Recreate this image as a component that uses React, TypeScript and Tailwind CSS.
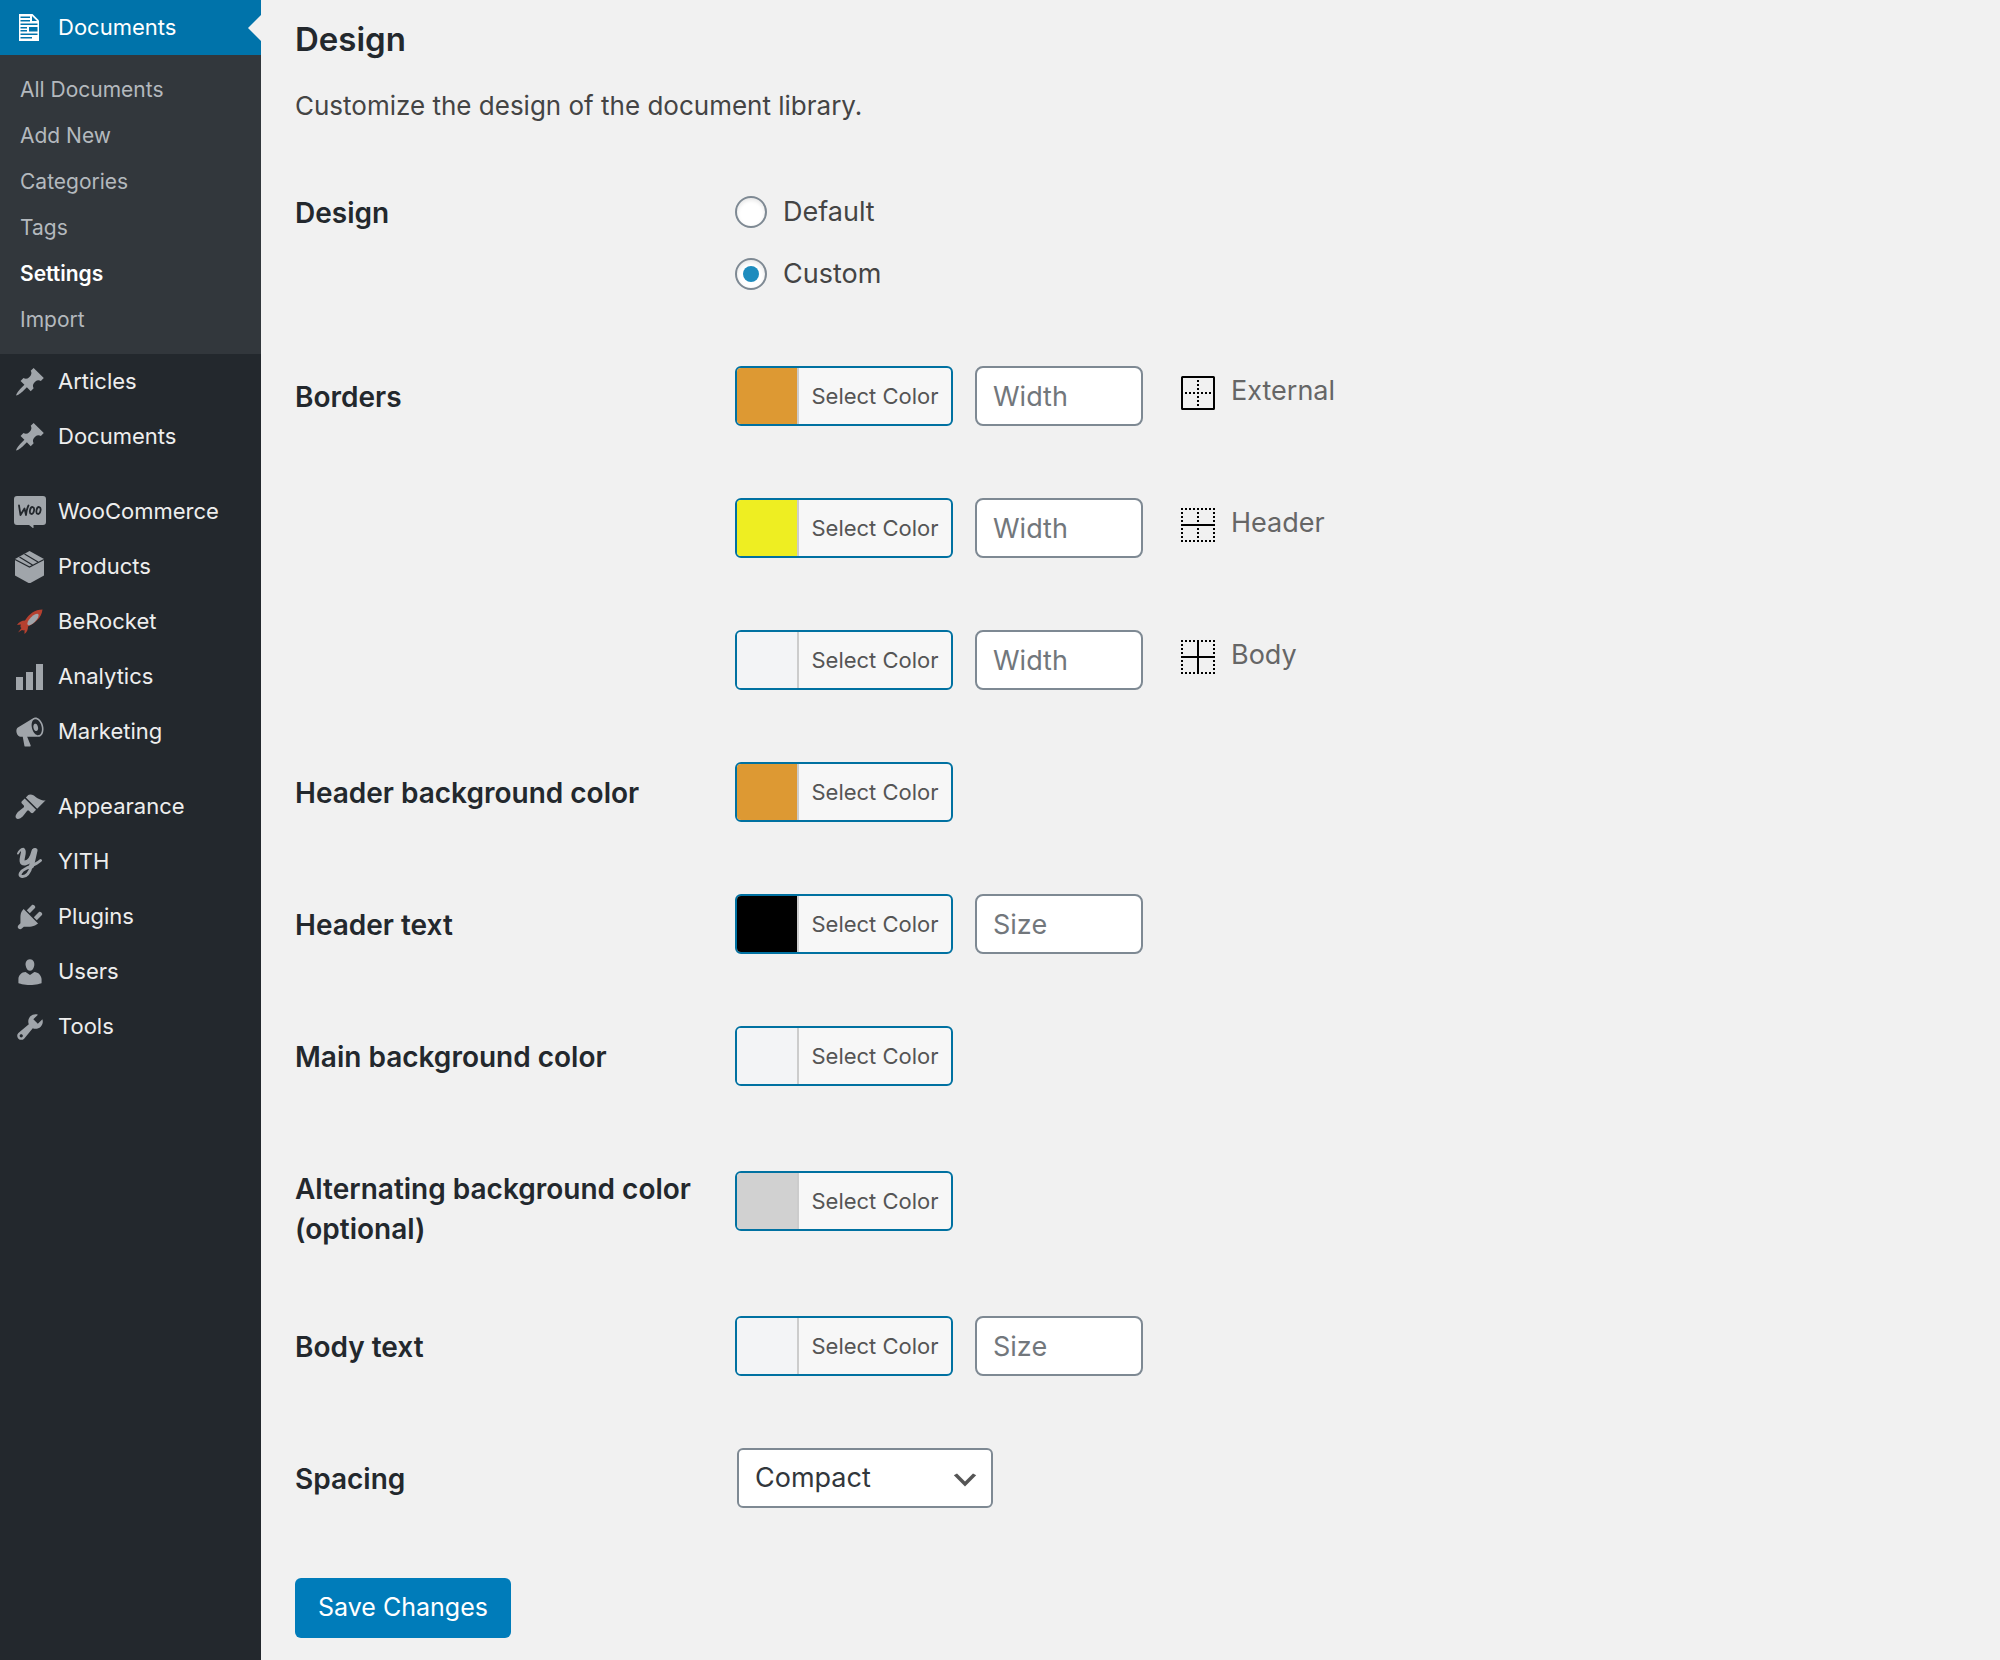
import React, { useState } from 'react';

interface MenuItem {
  label: string;
  icon: React.ReactNode;
}

interface ColorPickerProps {
  id: string;
  color: string;
}

interface SizeInputProps {
  id: string;
  label: string;
  placeholder: string;
}

interface FieldRowProps {
  label: string;
  htmlFor?: string;
  children: React.ReactNode;
}

const submenu = ['All Documents', 'Add New', 'Categories', 'Tags', 'Settings', 'Import'];

// All the menu icons are drawn on the same 20x20 grid
function Dashicon({ d }: { d: string }) {
  return (
    <svg viewBox="0 0 20 20" className="size-8 fill-current" aria-hidden="true">
      <path fillRule="evenodd" d={d} />
    </svg>
  );
}

const pin =
  'M10.44 3.02l1.82-1.82 6.36 6.35-1.83 1.82c-1.05-.68-2.48-.57-3.41.36l-.75.75c-.92.93-1.04 2.35-.35 3.41l-1.83 1.82-2.41-2.41-2.8 2.79c-.42.42-3.38 2.71-3.8 2.29s1.86-3.39 2.28-3.81l2.79-2.79L4.1 9.36l1.83-1.82c1.05.69 2.48.57 3.4-.36l.75-.75c.93-.92 1.05-2.35.36-3.41z';
const megaphone =
  'M18.15 5.94c.46 1.62.38 3.22-.02 4.48-.42 1.28-1.26 2.18-2.3 2.48-.16.06-.26.06-.4.06-.06.02-.12.02-.18.02-.06.02-.14.02-.22.02h-6.8l2.22 5.5c.02.14-.06.26-.14.34-.08.1-.24.16-.34.16H6.95c-.1 0-.26-.06-.34-.16-.08-.08-.16-.2-.14-.34l-1-5.5H4.25l-.02-.02c-.5.06-1.08-.18-1.54-.62s-.88-1.08-1.06-1.88c-.24-.8-.2-1.56-.02-2.2.18-.62.58-1.08 1.06-1.3l.02-.02 9-5.4c.1-.06.18-.1.24-.16.06-.04.14-.08.24-.12.16-.08.28-.12.5-.18 1.04-.3 2.24.1 3.22.98s1.84 2.24 2.26 3.86zm-2.58 5.98h-.02c.4-.1.74-.34 1.04-.7.58-.7.86-1.76.86-3.04 0-.64-.1-1.3-.28-1.98-.34-1.36-1.02-2.5-1.78-3.24s-1.68-1.1-2.46-.88c-.82.22-1.4.96-1.7 2-.32 1.04-.28 2.36.06 3.72.38 1.36 1 2.5 1.8 3.24.78.74 1.62 1.1 2.48.88zm-2.54-7.08c.22-.04.42-.02.62.04.38.16.76.48 1.02 1s.42 1.2.42 1.78c0 .3-.04.56-.12.8-.18.48-.44.84-.86.94-.34.1-.8-.06-1.14-.4s-.64-.86-.78-1.5c-.18-.62-.12-1.24.02-1.72s.48-.84.82-.94z';
const brush =
  'M14.48 11.06L7.41 3.99l1.5-1.5c.5-.56 2.3-.47 3.51.32 1.21.8 1.43 1.28 2.91 2.1 1.18.64 2.45 1.26 4.45.85zm-.71.71L6.7 4.7 4.93 6.47c-.39.39-.39 1.02 0 1.41l1.06 1.06c.39.39.39 1.03 0 1.42-.6.6-1.43 1.11-2.21 1.69-.35.26-.7.53-1.01.84C1.43 14.23.4 16.08 1.4 17.07c.99 1 2.84-.03 4.18-1.36.31-.31.58-.66.85-1.02.57-.78 1.08-1.61 1.69-2.21.39-.39 1.02-.39 1.41 0l1.06 1.06c.39.39 1.02.39 1.41 0z';
const plug =
  'M13.11 4.36L9.87 7.6 8 5.73l3.24-3.24c.35-.34 1.05-.2 1.56.32.52.51.66 1.21.31 1.55zm-8 1.77l.91-1.12 9.01 9.01-1.19.84c-.71.71-2.63 1.16-3.82 1.16H6.14L4.9 17.26c-.59.59-1.54.59-2.12 0-.59-.58-.59-1.53 0-2.12l1.24-1.24v-3.88c0-1.13.4-3.19 1.09-3.89zm7.26 3.97l3.24-3.24c.34-.35 1.04-.21 1.55.31.52.51.66 1.21.31 1.55l-3.24 3.25z';
const user =
  'M10 9.25c-2.27 0-2.73-3.44-2.73-3.44C7 4.02 7.82 2 9.97 2c2.16 0 2.98 2.02 2.71 3.81 0 0-.41 3.44-2.68 3.44zm0 2.57L12.72 10c2.39 0 4.52 2.33 4.52 4.53v2.49s-3.65 1.13-7.24 1.13c-3.65 0-7.24-1.13-7.24-1.13v-2.49c0-2.25 1.94-4.48 4.47-4.48z';
const wrench =
  'M16.68 9.77c-1.34 1.34-3.3 1.67-4.95.99l-5.41 6.52c-.99.99-2.59.99-3.58 0s-.99-2.59 0-3.57l6.52-5.42c-.68-1.65-.35-3.61.99-4.95 1.28-1.28 3.12-1.62 4.72-1.06l-2.89 2.89 2.82 2.82 2.86-2.87c.53 1.58.18 3.39-1.08 4.65zM3.81 16.21c.4.39 1.04.39 1.43 0 .4-.4.4-1.04 0-1.43-.39-.4-1.03-.4-1.43 0-.39.39-.39 1.03 0 1.43z';

function DocumentIcon() {
  return (
    <svg viewBox="0 0 32 32" className="size-8" aria-hidden="true">
      <path fill="#fff" d="M5 2h13.5l6.500 6.500V29H5z" />
      <g fill="#0073aa">
        <path d="M18 4v5h5z" />
        <path d="M6.500 4.500H16V6H6.500zM6.500 8H16v1.500H6.500zM6.500 11.500h17V13h-17zM6.500 15H13v1.500H6.500zM6.500 18H13v1.500H6.500zM15 15h8.500v4.500H15zM6.500 21.500h17V23h-17zM6.500 25H18v1.500H6.500z" />
      </g>
    </svg>
  );
}

function WooIcon() {
  return (
    <svg viewBox="0 0 32 32" className="size-8" aria-hidden="true">
      <path fill="currentColor" d="M3 0h26a3 3 0 0 1 3 3v23a3 3 0 0 1-3 3h-9.500v3.500L15 29H3a3 3 0 0 1-3-3V3a3 3 0 0 1 3-3z" />
      <g fill="none" stroke="#23282d" strokeWidth="1.800" strokeLinecap="round" strokeLinejoin="round">
        <path d="M5 9.500l1.500 9.500 4-6.500 1.500 6.500c.3-3.500 1-6.500 2.500-9.500" />
        <ellipse cx="18" cy="14.500" rx="2" ry="3.500" transform="rotate(12 18 14.500)" />
        <ellipse cx="24.500" cy="14.500" rx="2" ry="3.500" transform="rotate(12 24.500 14.500)" />
      </g>
    </svg>
  );
}

function BoxIcon() {
  return (
    <svg viewBox="0 0 32 32" className="size-8" aria-hidden="true">
      <path fill="currentColor" d="M15.500 0L30 8v16.500l-14.500 8L1 24.500V8z" />
      <path fill="none" stroke="#23282d" strokeWidth="1.200" d="M1 8.500L15.500 16 30 8.500M5.500 6L18.500 14M10.500 3L24 11" />
    </svg>
  );
}

function RocketIcon() {
  return (
    <svg viewBox="0 0 32 32" className="size-8" aria-hidden="true">
      <path
        fill="#b5402f"
        d="M28.500 3.500C21 3.500 15 8 11 14.500c-3.500 0-6 1.500-8 4.500l4-.5c-1 2-.5 3 .5 3.500L4 26.500l4-2.500c1 .5 1.500.5 2.500 0v4c2.500-2 3.500-4.500 3.500-7.500 6.500-3.500 13.500-8 14.500-17z"
      />
      <ellipse cx="19" cy="13.500" rx="7.500" ry="3" fill="#a0a5aa" transform="rotate(-46 19 13.500)" />
    </svg>
  );
}

function ChartIcon() {
  return (
    <svg viewBox="0 0 32 32" className="size-8" aria-hidden="true">
      <path fill="currentColor" d="M2 16h7v13H2zM12 11h7v18h-7zM22 3h7v26h-7z" />
    </svg>
  );
}

function YithIcon() {
  return (
    <svg viewBox="0 0 32 32" className="size-8 overflow-visible" aria-hidden="true">
      <g fill="none" stroke="currentColor" strokeLinecap="round" strokeLinejoin="round">
        <path strokeWidth="5" d="M9 4.500C11 7 4.500 17.500 11 17c4.500-.5 7.500-6 9-12" />
        <path strokeWidth="5" d="M21 4.500L17.500 20" />
        <path strokeWidth="3" d="M17.500 19C16 27 12 31 8 30.500c-4-.5-1.500-5.500 4-8 5-2.500 10-4 14.500-8" />
        <path strokeWidth="2" d="M4 7.500C5 5 6.500 3.500 9 3" />
      </g>
    </svg>
  );
}

const menuGroups: MenuItem[][] = [
  [
    { label: 'Articles', icon: <Dashicon d={pin} /> },
    { label: 'Documents', icon: <Dashicon d={pin} /> },
  ],
  [
    { label: 'WooCommerce', icon: <WooIcon /> },
    { label: 'Products', icon: <BoxIcon /> },
    { label: 'BeRocket', icon: <RocketIcon /> },
    { label: 'Analytics', icon: <ChartIcon /> },
    { label: 'Marketing', icon: <Dashicon d={megaphone} /> },
  ],
  [
    { label: 'Appearance', icon: <Dashicon d={brush} /> },
    { label: 'YITH', icon: <YithIcon /> },
    { label: 'Plugins', icon: <Dashicon d={plug} /> },
    { label: 'Users', icon: <Dashicon d={user} /> },
    { label: 'Tools', icon: <Dashicon d={wrench} /> },
  ],
];

// Border icons: solid lines are the ones the setting changes, the rest are dotted
function BorderIcon({ type }: { type: string }) {
  const frame = 'M0 1h34M0 33h34M1 4v28M33 4v28';
  return (
    <svg viewBox="0 0 34 34" className="mt-2.5 size-[34px] shrink-0" aria-hidden="true">
      <g fill="none" stroke="#000" strokeWidth="2">
        {type === 'External' && (
          <>
            <rect x="1" y="1" width="32" height="32" rx="0.5" />
            <path strokeDasharray="2 2" d="M4 17h26M17 4v26" />
          </>
        )}
        {type === 'Header' && (
          <>
            <path strokeDasharray="2 2" d={frame} />
            <path strokeDasharray="2 2" d="M17 4v28" />
            <path d="M0 17h34" />
          </>
        )}
        {type === 'Body' && (
          <>
            <path strokeDasharray="2 2" d={frame} />
            <path d="M0 17h34M17 0v34" />
          </>
        )}
      </g>
    </svg>
  );
}

function Sidebar() {
  return (
    <nav className="w-[261px] shrink-0 bg-[#23282d]">
      <a href="#documents" className="relative flex h-[55px] items-center gap-3 bg-[#0073aa] pl-3.5 text-[22px] text-white">
        <DocumentIcon />
        Documents
        <span className="absolute right-0 top-[15px] border-y-[13px] border-r-[13px] border-y-transparent border-r-[#f1f1f1]" />
      </a>
      <ul className="bg-[#32373c] pb-[11px] pt-3">
        {submenu.map((item) => (
          <li key={item}>
            <a
              href="#submenu"
              className={
                item === 'Settings'
                  ? 'block pl-5 text-[21px] leading-[46px] font-semibold text-white'
                  : 'block pl-5 text-[21px] leading-[46px] text-[#b4b9be]'
              }
            >
              {item}
            </a>
          </li>
        ))}
      </ul>
      <div className="flex flex-col gap-5">
        {menuGroups.map((group, i) => (
          <ul key={i}>
            {group.map((item) => (
              <li key={item.label}>
                <a href="#menu" className="flex h-[55px] items-center gap-3 pl-3.5 text-[22px] text-[#eee]">
                  <span className="text-[#a0a5aa]">{item.icon}</span>
                  {item.label}
                </a>
              </li>
            ))}
          </ul>
        ))}
      </div>
    </nav>
  );
}

function ColorPicker({ id, color }: ColorPickerProps) {
  return (
    <button
      id={id}
      type="button"
      className="flex h-[60px] w-[218px] shrink-0 overflow-hidden rounded-md border-2 border-[#0071a1] bg-[#f7f7f7]"
    >
      <span className="h-full w-[60px]" style={{ backgroundColor: color }} />
      <span className="flex h-full flex-1 items-center justify-center border-l-2 border-[#ccc] text-[22px] text-[#555]">
        Select Color
      </span>
    </button>
  );
}

function SizeInput({ id, label, placeholder }: SizeInputProps) {
  return (
    <input
      id={id}
      type="text"
      aria-label={label}
      placeholder={placeholder}
      className="h-[60px] w-[168px] rounded-lg border-2 border-[#7e8993] bg-white px-4 text-[27px] text-[#32373c] placeholder:text-[#72777c]"
    />
  );
}

function FieldRow({ label, htmlFor, children }: FieldRowProps) {
  return (
    <div className="grid grid-cols-[440px_1fr]">
      <div className="pb-[31px] pr-4 pt-[47px] text-[28px] leading-10 font-semibold text-[#23282d]">
        {htmlFor ? <label htmlFor={htmlFor}>{label}</label> : label}
      </div>
      <div className="flex items-center gap-[22px] py-9">{children}</div>
    </div>
  );
}

function App() {
  const [design, setDesign] = useState('Custom');
  const [spacing, setSpacing] = useState('Compact');

  const borders = [
    { label: 'External', color: '#dd9933' },
    { label: 'Header', color: '#eeee22' },
    { label: 'Body', color: '#f3f4f6' },
  ];

  return (
    <div className="flex min-h-screen bg-[#f1f1f1] font-[Inter,sans-serif] text-[#444]">
      <Sidebar />
      <main className="flex-1 px-[34px] pb-[22px] pt-4">
        <h2 className="text-[33px] leading-[46px] font-semibold text-[#23282d]">Design</h2>
        <p className="mt-6 mb-5 text-[26px] leading-10">Customize the design of the document library.</p>

        <form onSubmit={(e) => e.preventDefault()}>
          <fieldset className="grid grid-cols-[440px_1fr]">
            <div className="pt-[47px] text-[28px] leading-10 font-semibold text-[#23282d]">Design</div>
            <div className="flex flex-col gap-[22px] pb-9 pt-[46px]">
              {['Default', 'Custom'].map((option) => (
                <label key={option} className="flex items-center gap-4 text-[27px] leading-10">
                  <input
                    type="radio"
                    name="design"
                    value={option}
                    checked={design === option}
                    onChange={() => setDesign(option)}
                    className="grid size-8 appearance-none place-items-center rounded-full border-2 border-[#7e8993] bg-white shadow-[inset_0_2px_4px_rgba(0,0,0,0.1)] checked:before:size-4 checked:before:rounded-full checked:before:bg-[#1e8cbe]"
                  />
                  {option}
                </label>
              ))}
            </div>
          </fieldset>

          <FieldRow label="Borders">
            <div className="flex flex-col gap-[72px]">
              {borders.map((border) => (
                <div key={border.label} className="flex gap-[22px]">
                  <ColorPicker id={'border-' + border.label} color={border.color} />
                  <SizeInput id={'width-' + border.label} label={border.label + ' width'} placeholder="Width" />
                  <label
                    htmlFor={'width-' + border.label}
                    className="flex items-start gap-4 pl-4 text-[27px] leading-[50px] text-[#666]"
                  >
                    <BorderIcon type={border.label} />
                    {border.label}
                  </label>
                </div>
              ))}
            </div>
          </FieldRow>

          <FieldRow label="Header background color" htmlFor="header-bg">
            <ColorPicker id="header-bg" color="#dd9933" />
          </FieldRow>
          <FieldRow label="Header text" htmlFor="header-text">
            <ColorPicker id="header-text" color="#000000" />
            <SizeInput id="header-size" label="Header text size" placeholder="Size" />
          </FieldRow>
          <FieldRow label="Main background color" htmlFor="main-bg">
            <ColorPicker id="main-bg" color="#f3f4f6" />
          </FieldRow>
          <FieldRow label="Alternating background color (optional)" htmlFor="alt-bg">
            <ColorPicker id="alt-bg" color="#d1d1d1" />
          </FieldRow>
          <FieldRow label="Body text" htmlFor="body-text">
            <ColorPicker id="body-text" color="#f3f4f6" />
            <SizeInput id="body-size" label="Body text size" placeholder="Size" />
          </FieldRow>
          <FieldRow label="Spacing" htmlFor="spacing">
            <div className="relative ml-0.5">
              <select
                id="spacing"
                value={spacing}
                onChange={(e) => setSpacing(e.target.value)}
                className="h-[60px] w-[256px] appearance-none rounded-md border-2 border-[#7e8993] bg-white px-4 text-[27px] text-[#32373c]"
              >
                <option>Compact</option>
                <option>Normal</option>
                <option>Spacious</option>
              </select>
              <svg viewBox="0 0 20 20" className="pointer-events-none absolute right-3 top-4 size-8" aria-hidden="true">
                <path d="M5 6l5 5 5-5 2 1-7 7-7-7 2-1z" fill="#555" />
              </svg>
            </div>
          </FieldRow>

          <button type="submit" className="mt-[34px] h-[60px] w-[216px] rounded-md bg-[#007cba] text-[25px] text-white">
            Save Changes
          </button>
        </form>
      </main>
    </div>
  );
}

export default App;
